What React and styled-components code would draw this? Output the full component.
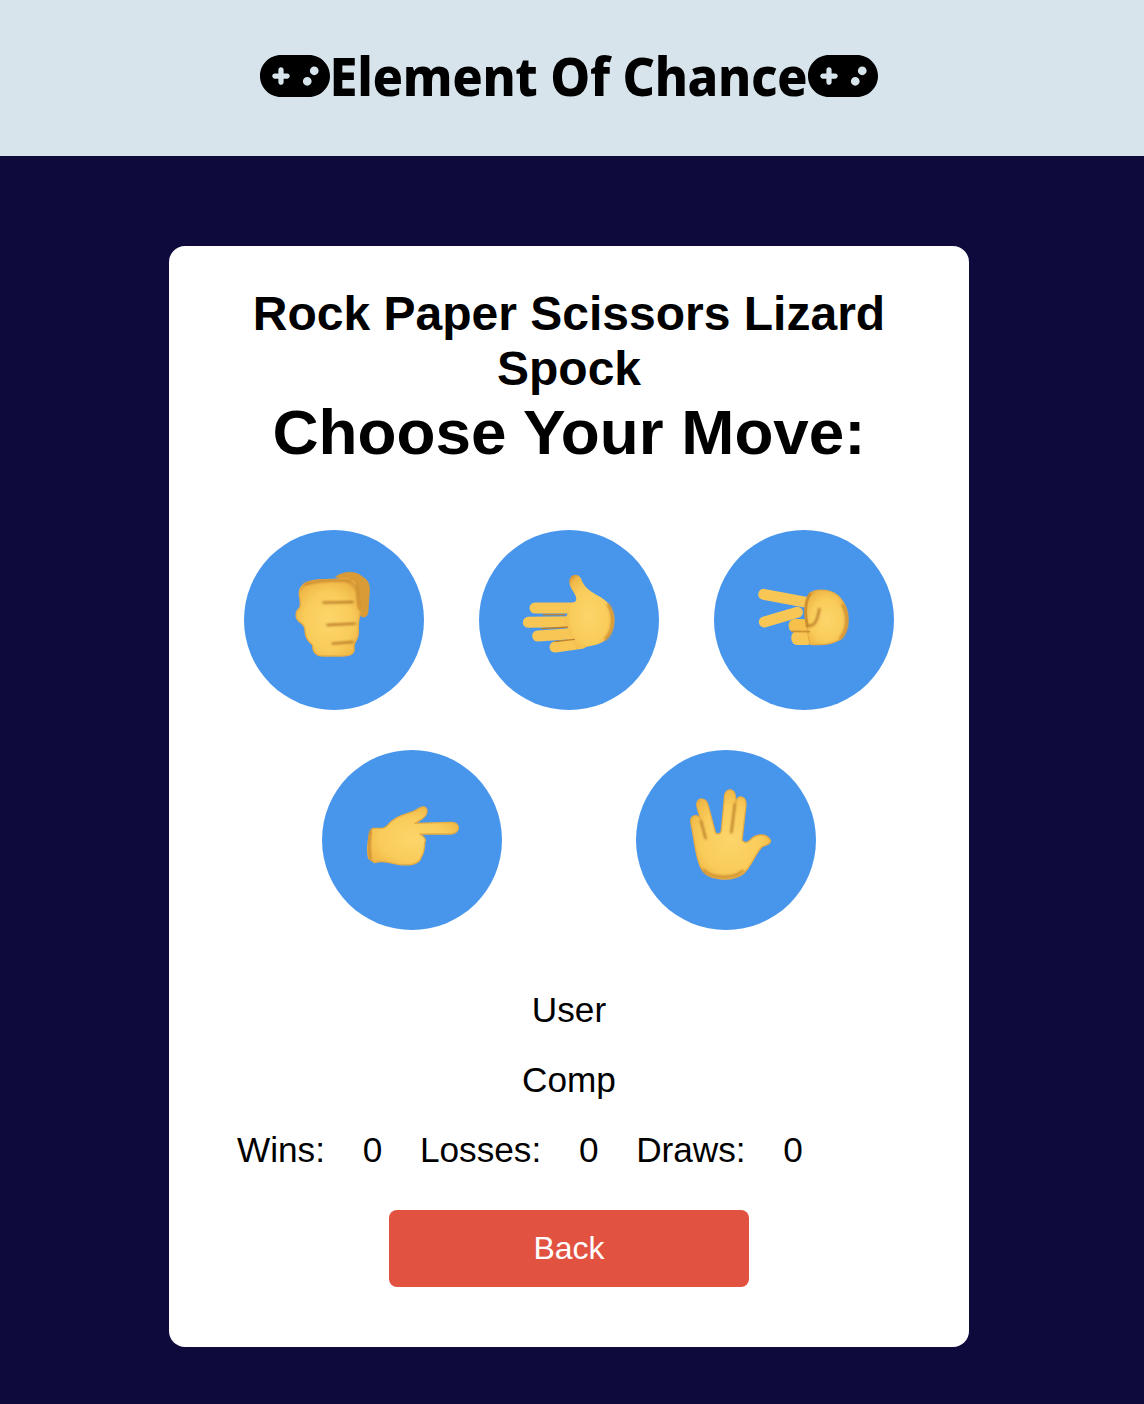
import styled, { createGlobalStyle } from 'styled-components';
import { FaGamepad } from 'react-icons/fa6';

const GlobalStyle = createGlobalStyle`
  body {
    margin: 0;
    background: #0f0a3c;
    font-family: "Liberation Sans", Arial, sans-serif;
    color: #000;
  }
`;

const Header = styled.header`
  height: 156px;
  box-sizing: border-box;
  padding: 0 6px 5px 0;
  background: #d8e4eb;
  display: flex;
  align-items: center;
  justify-content: center;
`;

const Brand = styled.h1`
  margin: 0;
  display: flex;
  align-items: center;
  font-family: "Noto Sans", sans-serif;
  font-weight: 800;
  font-size: 54px;
  line-height: 1;
  letter-spacing: -0.4px;
`;

// the installed face runs wider than the original one
const BrandText = styled.span`
  display: inline-block;
  margin: 0 -17px;
  transform: translateY(-1px) scaleX(0.935);
`;

const Pad = styled(FaGamepad)`
  width: 70px;
  height: 56px;
  flex: none;
`;

const Main = styled.main`
  padding: 90px 6px 57px 0;
  display: flex;
  justify-content: center;
`;

const Card = styled.section`
  width: 800px;
  box-sizing: border-box;
  padding: 40px 40px 60px;
  background: #fff;
  border-radius: 16px;
  text-align: center;
`;

const Title = styled.h2`
  margin: 0;
  font-size: 48px;
  line-height: 55px;
  font-weight: 700;
`;

const Prompt = styled.h2`
  margin: 0 0 62px;
  font-size: 63.8px;
  line-height: 72px;
  font-weight: 700;
`;

const Moves = styled.div`
  display: flex;
  justify-content: center;
  gap: ${(p) => p.$gap}px;
  margin-bottom: ${(p) => p.$below}px;
`;

const Move = styled.button`
  width: 180px;
  height: 180px;
  padding: 0;
  border: 0;
  border-radius: 50%;
  background: #4896ec;
  cursor: pointer;
  svg {
    display: block;
    width: 180px;
    height: 180px;
  }
`;

const Line = styled.p`
  margin: 0 0 30px;
  font-size: 35.2px;
  line-height: 40px;
`;

const Stats = styled.div`
  display: flex;
  gap: 37.7px;
  padding-left: 28px;
  margin-bottom: 40px;
  font-size: 35.2px;
  line-height: 40px;
`;

const BackButton = styled.button`
  display: block;
  width: 360px;
  height: 77px;
  margin: 0 auto;
  border: 0;
  border-radius: 8px;
  background: #e25241;
  color: #fff;
  font-family: inherit;
  font-size: 32px;
  cursor: pointer;
`;

// hand drawings use the coordinates of a 540 box around each circle
const Hand = ({ id, children }) => (
  <svg viewBox="12 15 540 540" aria-hidden="true">
    <defs>
      <radialGradient id={id} cx="0.5" cy="0.55" r="0.62">
        <stop offset="0" stopColor="#fcd56b" />
        <stop offset="0.6" stopColor="#f9cc5a" />
        <stop offset="0.9" stopColor="#f0b848" />
        <stop offset="1" stopColor="#d9993a" />
      </radialGradient>
      <filter id={`${id}-soft`} x="-10%" y="-10%" width="120%" height="120%">
        <feGaussianBlur stdDeviation="1.8" />
      </filter>
      <filter id={`${id}-shade`} x="-30%" y="-30%" width="160%" height="160%">
        <feGaussianBlur stdDeviation="3" />
      </filter>
    </defs>
    <g filter={`url(#${id}-soft)`}>{children(`url(#${id})`, `url(#${id}-shade)`)}</g>
  </svg>
);

const edge = { stroke: '#e8ad42', strokeWidth: 4, strokeLinejoin: 'round' };
const crease = { fill: 'none', stroke: '#bd7f2b', strokeWidth: 7, strokeLinecap: 'round' };
const shade = { fill: 'none', stroke: '#cf9033', strokeWidth: 9, strokeLinecap: 'round' };
const finger = { fill: 'none', stroke: '#f7c654', strokeWidth: 33, strokeLinecap: 'round' };

const Rock = () => (
  <Hand id="rock">
    {(fill, soft) => (
      <>
        <path
          d="M285 155C310 138 345 135 368 155C386 165 392 180 389 205L385 262C382 282 362 282 356 265L340 180Z"
          fill="#d99b36"
        />
        <path
          d="M178 210C176 180 200 168 235 165L315 162C340 162 352 178 352 205C352 225 358 235 360 262C358 285 352 290 355 320C356 340 344 350 342 360L342 378C340 390 325 393 305 393L250 393C225 393 218 380 218 360C205 350 195 335 195 315C195 300 185 295 178 290C165 280 165 260 178 250C185 240 180 225 178 210Z"
          fill={fill}
          {...edge}
        />
        <path d="M195 178C225 166 290 164 330 168" {...shade} filter={soft} />
        <path d="M350 180C354 200 352 225 358 250" {...shade} filter={soft} />
        <path d="M250 233L338 231M262 300L345 296M278 356L338 351" {...crease} filter={soft} />
      </>
    )}
  </Hand>
);

const Paper = () => (
  <Hand id="paper">
    {(fill, soft) => (
      <>
        <path d="M180 249L300 249M160 292L300 290M188 333L310 325M240 366L320 355" {...finger} />
        <path
          d="M283 170C283 150 305 140 318 160C325 185 345 200 375 215C405 232 420 260 418 290C415 330 395 350 360 360L305 372L268 290L290 233C310 232 305 215 295 200C288 190 283 180 283 170Z"
          fill={fill}
        />
        <path d="M400 240C418 268 418 315 392 342" {...shade} filter={soft} />
        <path d="M205 269L268 269M200 311L278 306M240 350L298 343" {...crease} strokeWidth="4" />
      </>
    )}
  </Hand>
);

const Scissors = () => (
  <Hand id="scissors">
    {(fill, soft) => (
      <>
        <path d="M161 208L290 232M163 291L262 262" {...finger} />
        <rect x="236" y="282" width="60" height="40" rx="18" fill="#f6c04c" />
        <rect x="244" y="318" width="64" height="42" rx="18" fill="#f8c653" />
        <path
          d="M300 205C320 190 372 190 395 225C420 260 420 310 395 340C370 358 345 360 300 358C295 340 292 320 292 302C282 265 284 232 300 205Z"
          fill={fill}
          {...edge}
        />
        <path d="M398 240C416 268 414 315 392 338" {...shade} filter={soft} />
        <path d="M300 207C284 232 284 265 292 302" {...shade} />
        <path d="M292 302C312 306 322 290 328 252" {...crease} filter={soft} />
        <path d="M246 319L298 320" {...shade} strokeWidth="5" />
      </>
    )}
  </Hand>
);

const Lizard = () => (
  <Hand id="lizard">
    {(fill, soft) => (
      <>
        <path
          d="M165 250C150 255 146 320 152 340L170 353C190 345 210 352 240 358C270 362 305 360 310 335C322 320 318 295 322 285C320 275 310 270 305 267L400 267C428 262 428 234 400 232L290 235C310 225 332 210 326 192C318 178 305 190 285 200C260 210 230 212 205 245L195 250Z"
          fill={fill}
          {...edge}
        />
        <path d="M160 258C152 280 152 318 158 340" {...shade} filter={soft} />
      </>
    )}
  </Hand>
);

const Spock = () => (
  <Hand id="spock">
    {(fill, soft) => (
      <>
        <path
          d="M205 365C190 330 190 300 178 240C170 210 195 205 205 222L195 185C190 155 222 155 228 180L250 262C255 270 265 268 268 258L278 150C285 128 308 130 310 155L312 170C318 150 342 150 342 180L330 285C335 295 345 295 355 285C370 268 400 262 415 285C418 295 405 300 390 305C370 325 360 360 335 385C300 410 225 410 205 365Z"
          fill={fill}
          {...edge}
        />
        <path d="M215 375C240 402 305 402 332 378" {...shade} filter={soft} />
        <path d="M207 228L221 280M309 176L298 262" {...crease} filter={soft} />
      </>
    )}
  </Hand>
);

const App = () => (
  <>
    <GlobalStyle />
    <Header>
      <Brand>
        <Pad />
        <BrandText>Element Of Chance</BrandText>
        <Pad />
      </Brand>
    </Header>
    <Main>
      <Card>
        <Title>Rock Paper Scissors Lizard Spock</Title>
        <Prompt>Choose Your Move:</Prompt>
        <Moves $gap={55} $below={40}>
          <Move aria-label="Rock"><Rock /></Move>
          <Move aria-label="Paper"><Paper /></Move>
          <Move aria-label="Scissors"><Scissors /></Move>
        </Moves>
        <Moves $gap={134} $below={60}>
          <Move aria-label="Lizard"><Lizard /></Move>
          <Move aria-label="Spock"><Spock /></Move>
        </Moves>
        <Line>User</Line>
        <Line>Comp</Line>
        <Stats>
          <span>Wins:</span>
          <span>0</span>
          <span>Losses:</span>
          <span>0</span>
          <span>Draws:</span>
          <span>0</span>
        </Stats>
        <BackButton>Back</BackButton>
      </Card>
    </Main>
  </>
);

export default App;
